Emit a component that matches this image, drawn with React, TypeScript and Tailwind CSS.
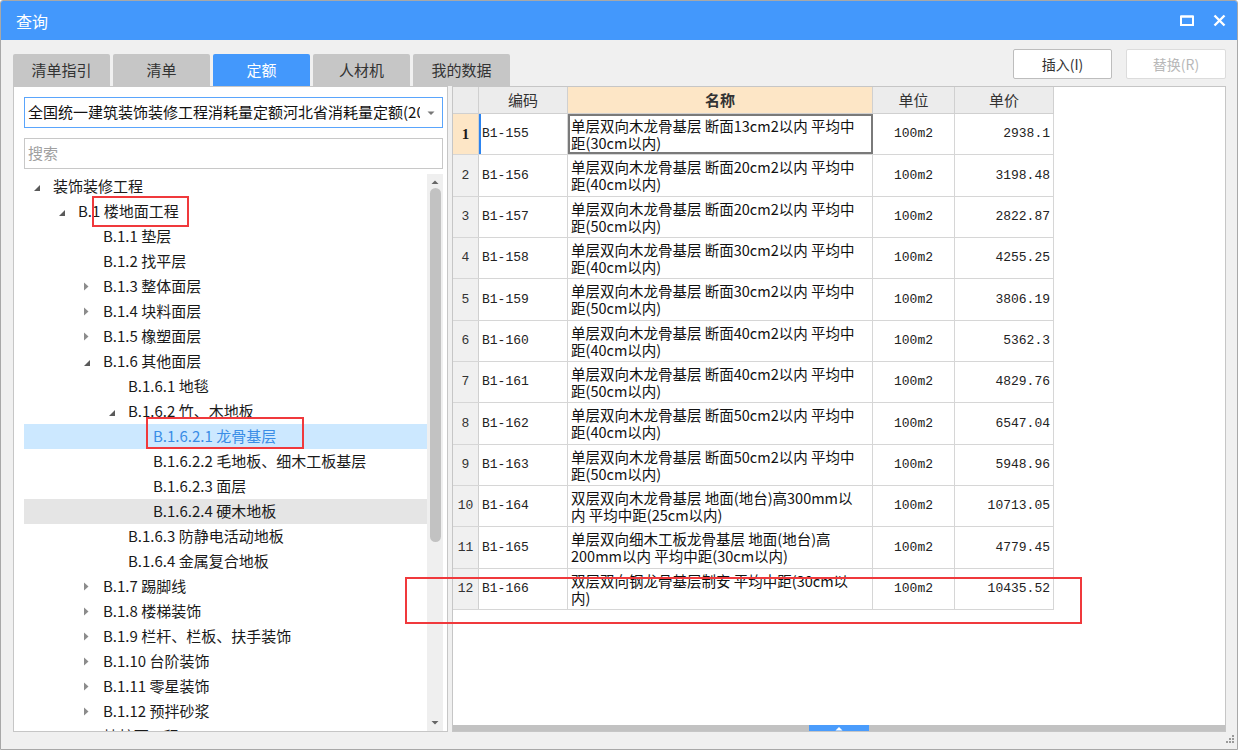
import React from 'react';

type Node = { l: number; a?: 'e' | 'c'; t: string; sel?: boolean; hov?: boolean };

const tree: Node[] = [
  { l: 0, a: 'e', t: '装饰装修工程' },
  { l: 1, a: 'e', t: 'B.1 楼地面工程' },
  { l: 2, t: 'B.1.1 垫层' },
  { l: 2, t: 'B.1.2 找平层' },
  { l: 2, a: 'c', t: 'B.1.3 整体面层' },
  { l: 2, a: 'c', t: 'B.1.4 块料面层' },
  { l: 2, a: 'c', t: 'B.1.5 橡塑面层' },
  { l: 2, a: 'e', t: 'B.1.6 其他面层' },
  { l: 3, t: 'B.1.6.1 地毯' },
  { l: 3, a: 'e', t: 'B.1.6.2 竹、木地板' },
  { l: 4, t: 'B.1.6.2.1 龙骨基层', sel: true },
  { l: 4, t: 'B.1.6.2.2 毛地板、细木工板基层' },
  { l: 4, t: 'B.1.6.2.3 面层' },
  { l: 4, t: 'B.1.6.2.4 硬木地板', hov: true },
  { l: 3, t: 'B.1.6.3 防静电活动地板' },
  { l: 3, t: 'B.1.6.4 金属复合地板' },
  { l: 2, a: 'c', t: 'B.1.7 踢脚线' },
  { l: 2, a: 'c', t: 'B.1.8 楼梯装饰' },
  { l: 2, a: 'c', t: 'B.1.9 栏杆、栏板、扶手装饰' },
  { l: 2, a: 'c', t: 'B.1.10 台阶装饰' },
  { l: 2, a: 'c', t: 'B.1.11 零星装饰' },
  { l: 2, a: 'c', t: 'B.1.12 预拌砂浆' },
  { l: 1, a: 'c', t: 'B.2 墙柱面工程' },
];

const rows = [
  ['B1-155', '单层双向木龙骨基层 断面13cm2以内 平均中', '距(30cm以内)', '2938.1'],
  ['B1-156', '单层双向木龙骨基层 断面20cm2以内 平均中', '距(40cm以内)', '3198.48'],
  ['B1-157', '单层双向木龙骨基层 断面20cm2以内 平均中', '距(50cm以内)', '2822.87'],
  ['B1-158', '单层双向木龙骨基层 断面30cm2以内 平均中', '距(40cm以内)', '4255.25'],
  ['B1-159', '单层双向木龙骨基层 断面30cm2以内 平均中', '距(50cm以内)', '3806.19'],
  ['B1-160', '单层双向木龙骨基层 断面40cm2以内 平均中', '距(40cm以内)', '5362.3'],
  ['B1-161', '单层双向木龙骨基层 断面40cm2以内 平均中', '距(50cm以内)', '4829.76'],
  ['B1-162', '单层双向木龙骨基层 断面50cm2以内 平均中', '距(40cm以内)', '6547.04'],
  ['B1-163', '单层双向木龙骨基层 断面50cm2以内 平均中', '距(50cm以内)', '5948.96'],
  ['B1-164', '双层双向木龙骨基层 地面(地台)高300mm以', '内 平均中距(25cm以内)', '10713.05'],
  ['B1-165', '单层双向细木工板龙骨基层 地面(地台)高', '200mm以内 平均中距(30cm以内)', '4779.45'],
  ['B1-166', '双层双向钢龙骨基层制安 平均中距(30cm以', '内)', '10435.52'],
];

const tabs = ['清单指引', '清单', '定额', '人材机', '我的数据'];

const Arrow = ({ a }: { a?: 'e' | 'c' }) => {
  if (a === 'e')
    return (
      <svg width="8" height="8" viewBox="0 0 8 8" className="mt-[3px]">
        <path d="M7 1 L7 7 L1 7 Z" fill="#5a5a5a" />
      </svg>
    );
  if (a === 'c')
    return (
      <svg width="6" height="9" viewBox="0 0 6 9">
        <path d="M1 0.5 L5.5 4.5 L1 8.5 Z" fill="#8c8c8c" />
      </svg>
    );
  return null;
};

const App: React.FC = () => {
  return (
    <div className="w-[1238px] h-[750px] relative bg-[#f0f0f0] border border-[#a8a8a8] rounded-t-[3px] overflow-hidden flex flex-col font-['Noto_Sans_CJK_SC','Noto_Sans',sans-serif] text-[#1a1a1a]">
      {/* Title bar */}
      <div className="h-[39px] shrink-0 bg-[#4398fc] flex items-center justify-between pl-[15px] pr-[11px]">
        <span className="text-white text-[16px]">查询</span>
        <div className="flex items-center gap-[19px]">
          <svg width="14" height="11" viewBox="0 0 14 11">
            <rect x="1" y="1.5" width="12" height="8.5" fill="none" stroke="#fff" strokeWidth="2" />
            <rect x="1" y="0.5" width="12" height="2" fill="#fff" />
          </svg>
          <svg width="13" height="13" viewBox="0 0 13 13">
            <path d="M1.5 1.5 L11.5 11.5 M11.5 1.5 L1.5 11.5" stroke="#fff" strokeWidth="2.4" />
          </svg>
        </div>
      </div>

      {/* Tabs + buttons */}
      <div className="h-[46px] shrink-0 flex justify-between pl-[12px] pr-[11px]">
        <div className="flex items-end gap-[3px]">
          {tabs.map((t) => (
            <div
              key={t}
              className={
                t === '定额'
                  ? 'w-[97px] h-[32px] rounded-t-[2px] bg-[#4398fc] text-white text-[15px] flex items-center justify-center'
                  : 'w-[97px] h-[32px] rounded-t-[2px] bg-[#c6c6c6] text-[#333] text-[15px] flex items-center justify-center'
              }
            >
              {t}
            </div>
          ))}
        </div>
        <div className="flex gap-[14px] mt-[9px] h-[30px]">
          <button className="w-[99px] h-[30px] bg-white border border-[#bdbdbd] rounded-[2px] text-[14px] text-[#333]">
            插入(I)
          </button>
          <button className="w-[100px] h-[30px] bg-white border border-[#dcdcdc] rounded-[2px] text-[14px] text-[#b8b8b8]">
            替换(R)
          </button>
        </div>
      </div>

      {/* Main area */}
      <div className="h-[646px] shrink-0 flex gap-[4px] pl-[12px] pr-[11px]">
        {/* Left panel */}
        <div className="w-[435px] h-full bg-white border border-[#c6c6c6] pl-[10px] pr-[4px] pt-[10px] flex flex-col">
          <div className="h-[31px] border border-[#5aa5fc] flex items-center pl-[3px] pr-[6px] overflow-hidden">
            <span className="flex-1 whitespace-nowrap overflow-hidden text-[15px] text-[#111]">
              全国统一建筑装饰装修工程消耗量定额河北省消耗量定额(2016)
            </span>
            <svg width="10" height="10" viewBox="0 0 10 10" className="ml-[6px] shrink-0">
              <path d="M1.5 3.5 L8.5 3.5 L5 7 Z" fill="#777" />
            </svg>
          </div>
          <div className="h-[31px] mt-[10px] border-[1.5px] border-[#c8c8c8] flex items-center pl-[3px] text-[15px] text-[#a0a0a0]">
            搜索
          </div>
          <div className="mt-[5px] flex flex-1 overflow-hidden">
            <div className="flex-1 overflow-hidden">
              {tree.map((n, i) => (
                <div
                  key={i}
                  className={
                    n.sel
                      ? 'h-[25px] flex items-center bg-[#cce8ff] text-[#3a8de6]'
                      : n.hov
                      ? 'h-[25px] flex items-center bg-[#e5e5e5]'
                      : 'h-[25px] flex items-center'
                  }
                  style={{ paddingLeft: 8 + n.l * 25 }}
                >
                  <div className="w-[21px] pl-[1px] flex items-center">
                    <Arrow a={n.a} />
                  </div>
                  <span className="text-[15px] whitespace-nowrap">{n.t}</span>
                </div>
              ))}
            </div>
            <div className="w-[16px] bg-[#efefef] flex flex-col items-center">
              <svg width="10" height="10" viewBox="0 0 10 10" className="mt-[3px]">
                <path d="M1.5 7 L8.5 7 L5 3.5 Z" fill="#666" />
              </svg>
              <div className="w-[11px] h-[354px] mt-[1px] rounded-full bg-[#c2c2c2]" />
              <div className="flex-1" />
              <svg width="10" height="10" viewBox="0 0 10 10" className="mb-[3px]">
                <path d="M1.5 3 L8.5 3 L5 6.5 Z" fill="#666" />
              </svg>
            </div>
          </div>
        </div>

        {/* Right panel */}
        <div className="flex-1 h-full bg-white border border-[#c6c6c6] flex flex-col">
          <div className="flex-1 overflow-hidden">
            <div className="w-[601px]">
              <div className="h-[27px] flex text-[15px] text-[#333] border-b border-[#d0d0d0]">
                <div className="w-[26px] bg-[#ececec] border-r border-[#d0d0d0]" />
                <div className="w-[89px] bg-[#ececec] border-r border-[#d0d0d0] flex items-center justify-center">编码</div>
                <div className="w-[305px] bg-[#fde6c6] border-r border-[#d0d0d0] flex items-center justify-center font-bold">名称</div>
                <div className="w-[82px] bg-[#ececec] border-r border-[#d0d0d0] flex items-center justify-center">单位</div>
                <div className="w-[99px] bg-[#ececec] border-r border-[#d0d0d0] flex items-center justify-center">单价</div>
              </div>
              {rows.map((r, i) => (
                <div key={i} className="h-[41.33px] flex border-b border-[#d6d6d6]">
                  <div
                    className={
                      i === 0
                        ? 'w-[26px] bg-[#fde6c6] border-r border-[#d0d0d0] flex items-center justify-center font-["Liberation_Serif",serif] font-bold text-[15px]'
                        : 'w-[26px] bg-[#f0f0f0] border-r border-[#d0d0d0] flex items-center justify-center font-["Liberation_Mono",monospace] text-[13px] text-[#333]'
                    }
                  >
                    {i + 1}
                  </div>
                  <div
                    className={
                      i === 0
                        ? 'w-[89px] border-l-2 border-l-[#2c84f0] border-r border-r-[#d6d6d6] flex items-center pl-[1px] font-["Liberation_Mono",monospace] text-[13px] text-[#222]'
                        : 'w-[89px] border-r border-[#d6d6d6] flex items-center pl-[3px] font-["Liberation_Mono",monospace] text-[13px] text-[#222]'
                    }
                  >
                    {r[0]}
                  </div>
                  <div
                    className={
                      i === 0
                        ? 'w-[305px] border-2 border-[#7a7a7a] flex flex-col justify-center pl-[1px] text-[14.5px] leading-[17px] text-[#111] whitespace-nowrap overflow-hidden'
                        : 'w-[305px] border-r border-[#d6d6d6] flex flex-col justify-center pl-[3px] text-[14.5px] leading-[17px] text-[#111] whitespace-nowrap overflow-hidden'
                    }
                  >
                    <span className="h-[17px]">{r[1]}</span>
                    <span className="h-[17px]">{r[2]}</span>
                  </div>
                  <div className="w-[82px] border-r border-[#d6d6d6] flex items-center justify-center font-['Liberation_Mono',monospace] text-[13px] text-[#222]">
                    100m2
                  </div>
                  <div className="w-[99px] border-r border-[#d6d6d6] flex items-center justify-end pr-[3px] font-['Liberation_Mono',monospace] text-[13px] text-[#222]">
                    {r[3]}
                  </div>
                </div>
              ))}
            </div>
          </div>
          <div className="h-[6px] bg-[#c2c2c2] flex justify-center">
            <div className="w-[60px] h-[6px] bg-[#4a9cfc] flex items-center justify-center">
              <svg width="8" height="5" viewBox="0 0 8 5">
                <path d="M0.5 4.5 L4 1 L7.5 4.5 Z" fill="#fff" />
              </svg>
            </div>
          </div>
        </div>
      </div>

      {/* Bottom strip */}
      <div className="flex-1 flex justify-end items-end pr-[2px] pb-[3px]">
        <svg width="11" height="11" viewBox="0 0 11 11">
          <rect x="8" y="0" width="2" height="2" fill="#9a9a9a" />
          <rect x="5" y="3" width="2" height="2" fill="#9a9a9a" />
          <rect x="8" y="3" width="2" height="2" fill="#9a9a9a" />
          <rect x="2" y="6" width="2" height="2" fill="#9a9a9a" />
          <rect x="5" y="6" width="2" height="2" fill="#9a9a9a" />
          <rect x="8" y="6" width="2" height="2" fill="#9a9a9a" />
        </svg>
      </div>

      {/* Red annotation boxes */}
      <div className="absolute left-[91px] top-[195px] w-[97px] h-[31px] border-2 border-[#f0393c]" />
      <div className="absolute left-[145px] top-[416px] w-[158px] h-[32px] border-2 border-[#f0393c]" />
      <div className="absolute left-[404px] top-[576px] w-[677px] h-[47px] border-2 border-[#f0393c]" />
    </div>
  );
};

export default App;
